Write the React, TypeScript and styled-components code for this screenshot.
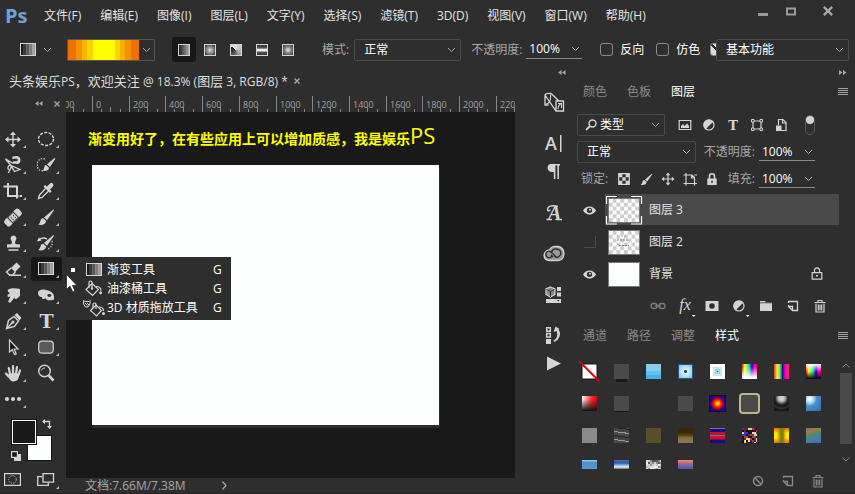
import React from "react";
import styled, { createGlobalStyle } from "styled-components";

const ui = '"Open Sans", "Noto Sans CJK SC", sans-serif';
const ink = "#d4d4d4";

const Global = createGlobalStyle`
  * { box-sizing: border-box; }
  body { margin: 0; background: #2e2e2e; color: #e4e4e4; font: 12px/16px ${ui}; }
  button, input, select { font: inherit; color: inherit; background: none; border: 0; padding: 0; margin: 0; }
  button { cursor: pointer; }
  svg { display: block; flex: none; overflow: visible; }
`;

/* ---------- frame ---------- */
const Page = styled.div`
  display: flex;
  flex-direction: column;
  min-height: 100vh;
  border-bottom: 1px solid #252327;
`;
const MenuBar = styled.header`
  display: flex;
  align-items: center;
  height: 32px;
  padding: 0 4px 0 5px;
`;
const Logo = styled.span`
  width: 34px;
  font: 700 20px/24px "Open Sans", sans-serif;
  color: #6ea3d6;
`;
const Menus = styled.nav`
  display: flex;
  gap: 10px;
  flex: 1;
`;
const MenuButton = styled.button`
  padding: 0 4px 0 5px;
  white-space: nowrap;
`;
const WindowButton = styled.button<{ $wide?: boolean }>`
  display: flex;
  justify-content: center;
  width: ${(p) => (p.$wide ? 46 : 28)}px;
  padding-bottom: 10px;
`;
const OptionsBar = styled.div`
  display: flex;
  align-items: center;
  height: 35px;
  padding: 0 6px 0 20px;
`;
const Body = styled.div`
  display: flex;
  flex: 1;
`;
const Workspace = styled.main`
  display: flex;
  flex-direction: column;
  flex: 1;
  min-width: 0;
`;
const WorkRow = styled.div`
  display: flex;
  flex: 1;
`;

/* ---------- shared controls ---------- */
const IconButton = styled.button<{ $w?: number }>`
  display: flex;
  align-items: center;
  justify-content: center;
  flex: none;
  width: ${(p) => p.$w ?? 24}px;
  height: 22px;
  color: ${ink};
`;
const SelectBox = styled.span<{ $w: number; $gap?: number }>`
  display: grid;
  align-items: center;
  flex: none;
  width: ${(p) => p.$w}px;
  height: 22px;
  margin-left: ${(p) => p.$gap ?? 0}px;
  border: 1px solid #4a4a4a;
  border-radius: 2px;
  > * { grid-area: 1 / 1; }
  > svg { justify-self: end; margin-right: 4px; pointer-events: none; }
`;
const NativeSelect = styled.select<{ $pad?: number }>`
  appearance: none;
  width: 100%;
  height: 20px;
  padding-left: ${(p) => p.$pad ?? 9}px;
  color: #fff;
  outline: none;
  option { background: #2e2e2e; }
`;
const SearchMark = styled.span`
  padding-left: 7px;
  pointer-events: none;
`;
const FieldLabel = styled.label<{ $gap?: number }>`
  flex: none;
  margin-left: ${(p) => p.$gap ?? 0}px;
  color: #a6a6a6;
  white-space: nowrap;
`;
const NumberBox = styled.span`
  display: flex;
  align-items: center;
  flex: none;
  width: 56px;
  height: 18px;
  margin-left: 4px;
  padding: 0 3px;
  border-bottom: 1px solid #8a8a8a;
`;
const NumberInput = styled.input`
  width: 42px;
  color: #fff;
  outline: none;
`;
const Check = styled.label<{ $gap: number }>`
  display: flex;
  align-items: center;
  gap: 7px;
  flex: none;
  margin-left: ${(p) => p.$gap}px;
  color: #fff;
`;
const CheckInput = styled.input<{ $on?: boolean }>`
  appearance: none;
  flex: none;
  width: 13px;
  height: 13px;
  border: 1px solid #8a8a8a;
  border-radius: 3px;
  background: ${(p) => (p.$on ? "linear-gradient(45deg, #dcdcdc 42%, #222 42% 58%, #dcdcdc 58%)" : "transparent")};
`;
const Clipped = styled.span`
  display: flex;
  align-items: center;
  width: 6px;
  margin-left: auto;
  overflow: hidden;
`;

const Chevron = () => (
  <svg width="9" height="6" viewBox="0 0 9 6" fill="none" stroke="#a8a8a8"><path d="M1 1l3.5 3.5L8 1" /></svg>
);
const Select = ({ id, value, w, gap, pad, label }: { id: string; value: string; w: number; gap?: number; pad?: number; label?: string }) => (
  <SelectBox $w={w} $gap={gap}>
    <NativeSelect id={id} $pad={pad} aria-label={label}><option>{value}</option></NativeSelect>
    <Chevron />
  </SelectBox>
);
const Percent = ({ id }: { id: string }) => (
  <NumberBox><NumberInput id={id} defaultValue="100%" /><Chevron /></NumberBox>
);

/* ---------- options bar ---------- */
const PresetButton = styled.button`
  display: flex;
  align-items: center;
  gap: 7px;
`;
const GradientPicker = styled.button`
  display: flex;
  align-items: center;
  gap: 3px;
  width: 88px;
  height: 22px;
  margin-left: 15px;
  border: 1px solid #565656;
  border-radius: 1px;
`;
const GradientFill = styled.span`
  width: 71px;
  height: 20px;
  background: linear-gradient(90deg, #f07000 8px, #f49400 8px 14px, #f8b400 14px 19px, #fcd400 19px 25px,
    #ffff00 25px 47px, #fcd400 47px 52px, #f8b000 52px 57px, #f49000 57px 63px, #f07000 63px);
`;
const TypeGroup = styled.div`
  display: flex;
  gap: 2px;
  margin-left: 17px;
`;
const TypeButton = styled.button<{ $active?: boolean }>`
  display: flex;
  align-items: center;
  justify-content: center;
  width: 24px;
  height: 25px;
  border-radius: 3px;
  background: ${(p) => (p.$active ? "#171717" : "none")};
`;
const TypeChip = styled.span<{ $fill: string }>`
  width: 12px;
  height: 12px;
  border: 1px solid #d4d4d4;
  background: ${(p) => p.$fill};
`;

const GradientGlyph = () => (
  <svg width="16" height="13" viewBox="0 0 16 13">
    <rect width="16" height="13" fill={ink} />
    {["#1c1c1c", "#3a3a3a", "#585858", "#7c7c7c", "#a0a0a0"].map((c, i) => (
      <rect key={c} x={1 + i * 2.8} y="1" width="2.8" height="11" fill={c} />
    ))}
  </svg>
);

/* ---------- document ---------- */
const DocTab = styled.div`
  display: flex;
  align-items: center;
  gap: 6px;
  height: 28px;
  padding-left: 9px;
  font-size: 13px;
  white-space: nowrap;
  color: #dedede;
`;
const TabLatin = styled.span`
  font-size: 12px;
`;
const DocColumn = styled.div`
  display: flex;
  flex-direction: column;
  flex: 1;
  min-width: 0;
`;
const RulerBox = styled.div`
  height: 17px;
  overflow: hidden;
`;
const Canvas = styled.div`
  flex: 1;
  padding: 13px 76px 0 22px;
  background: #191919;
  overflow: hidden;
`;
const Caption = styled.p`
  height: 20px;
  margin: 0;
  font: 700 14px/20px "Noto Sans CJK SC", sans-serif;
  color: #ffff00;
  white-space: nowrap;
`;
const CaptionLatin = styled.span`
  font: 400 22px/20px "Open Sans", sans-serif;
`;
const Artboard = styled.div`
  height: 260px;
  margin: 20px 0 0 4px;
  background: #fdfefe;
  box-shadow: 2px 3px 0 -1px #2e2e2e, 0 3px 0 #2a2a2a;
`;
const StatusBar = styled.footer`
  display: flex;
  align-items: center;
  gap: 36px;
  height: 15px;
  padding-left: 19px;
  color: #a8a8a8;
`;

const Ruler = () => {
  const step = 36.7;
  const ticks = Array.from({ length: 13 }, (_, i) => i - 1);
  return (
    <RulerBox>
      <svg width="449" height="17" fill="#a2a2a2" fontSize="9" fontFamily="Open Sans, sans-serif">
        {ticks.map((i) => {
          const x = Math.round(26 + i * step);
          return (
            <g key={i}>
              <rect x={x} y="1" width="1" height="16" fill="#858585" />
              {[9, 18, 28].map((d) => <rect key={d} x={x + d} y={d === 18 ? 12 : 14} width="1" height="5" fill="#858585" />)}
              <text x={x + 4} y="13">{Math.abs(i * 200)}</text>
            </g>
          );
        })}
      </svg>
    </RulerBox>
  );
};

/* ---------- toolbox ---------- */
const Toolbox = styled.aside`
  flex: none;
  width: 66px;
`;
const ToolboxHead = styled.div`
  display: flex;
  align-items: center;
  justify-content: flex-end;
  gap: 11px;
  height: 17px;
  padding-right: 6px;
`;
const Tools = styled.div`
  display: grid;
  grid-template-columns: 29px 31px;
  grid-auto-rows: 24px;
  gap: 2px;
  margin-top: 15px;
`;
const ToolSlot = styled.div`
  position: relative;
`;
const ToolButton = styled.button<{ $active?: boolean }>`
  display: flex;
  justify-content: flex-end;
  width: 100%;
  height: 24px;
  padding-right: 2px;
  border-radius: 3px;
  background: ${(p) => (p.$active ? "#171717" : "none")};
`;
const Colors = styled.div`
  display: grid;
  grid-template-columns: 16px 10px 15px;
  grid-template-rows: 16px 10px 16px;
  margin: 8px 0 0 11px;
`;
const ColorButton = styled.button<{ $front?: boolean }>`
  grid-area: ${(p) => (p.$front ? "1 / 1 / 3 / 3" : "2 / 2 / 4 / 4")};
  z-index: ${(p) => (p.$front ? 1 : 0)};
  border: 1px solid #151515;
  background: ${(p) => (p.$front ? "#191919" : "#fdfefe")};
  box-shadow: ${(p) => (p.$front ? "inset 0 0 0 1px #fff" : "none")};
`;
const SwapButton = styled.button`
  grid-area: 1 / 3;
  justify-self: end;
  align-self: start;
`;
const ResetButton = styled.button`
  grid-area: 3 / 1;
  justify-self: start;
  align-self: end;
`;
const ModeRow = styled.div`
  display: flex;
  gap: 16px;
  margin-top: 12px;
  padding-left: 4px;
`;
const ModeButton = styled.button`
  display: flex;
  height: 15px;
`;
const Flyout = styled.div`
  position: absolute;
  left: 35px;
  top: 0;
  z-index: 2;
  width: 165px;
  padding: 3px 0;
  background: #2e2e2e;
`;
const FlyoutItem = styled.button`
  display: grid;
  grid-template-columns: 9px 27px 1fr 18px;
  align-items: center;
  width: 100%;
  height: 19px;
  padding-left: 5px;
  text-align: left;
  color: #fff;
  > svg { justify-self: center; }
`;
const CurrentMark = styled.span<{ $on?: boolean }>`
  width: 4px;
  height: 4px;
  background: ${(p) => (p.$on ? "#fff" : "none")};
`;
const Pointer = styled.svg`
  position: absolute;
  left: 35px;
  top: 17px;
  z-index: 3;
`;

const Brush = () => (
  <g fill={ink}>
    <path d="M20.4 4.4L21 5.2L14 15.2L11 12.4Z" />
    <path d="M10.2 13.2C8 13.2 7.6 15 7.2 16.8C6.8 18.4 5.8 19.2 5 19.6C8.4 20.6 12.6 20 13.2 16Z" />
  </g>
);
const Bucket = () => (
  <svg width="19" height="17" viewBox="0 0 19 17" fill="none" stroke={ink} strokeWidth="1.2">
    <path d="M8 3.5L14.5 9.5L8.5 15.5L2 9.5Z" /><path d="M5 8V2.5C5 .5 8 .5 8 2.5V8" />
    <path d="M12 6.5c4 0 5 2 5 4" /><circle cx="16.6" cy="12.8" r="1.5" fill={ink} stroke="none" />
    <circle cx="8" cy="8.5" r="1.2" fill={ink} stroke="none" />
  </svg>
);
const Bucket3D = () => (
  <svg width="22" height="18" viewBox="0 0 22 18" fill="none" stroke={ink} strokeWidth="1.2">
    <path d="M.5 1.5L2 2.5H6L7 1.5V5L5 8H2.5L.5 5Z" strokeWidth="1" />
    <path d="M2 4h1v1H2zM4 4h1v1H4zM3 5h1v1H3zM5 5h1v1H5zM4 6.5h1v1H4z" fill={ink} stroke="none" />
    <path d="M13 6L18.5 11.5L13.5 17L7.5 11.5Z" /><path d="M10 9.5V5.5C10 3.5 13 3.5 13 5.5V10" />
    <path d="M16 8c3.5 0 4.5 2 4.5 4" /><circle cx="20.5" cy="14.5" r="1.5" fill={ink} stroke="none" />
  </svg>
);

type Tool = { name: string; art: React.ReactNode; plain?: boolean };
const S = ({ children, w = 1.4 }: { children: React.ReactNode; w?: number }) => (
  <g fill="none" stroke={ink} strokeWidth={w}>{children}</g>
);
const tools: Tool[] = [
  { name: "移动工具", art: <><S><path d="M13 6v13M6 12.5h14" /></S><path fill={ink} d="M13 4.5l3 3.5h-6zM13 20.5l3-3.5h-6zM5 12.5l3.5-3v6zM21 12.5l-3.5-3v6z" /></> },
  { name: "椭圆选框工具", art: <S><ellipse cx="13" cy="12" rx="7.5" ry="6.5" strokeDasharray="3 1.4" /></S> },
  { name: "磁性套索工具", art: <><S w={1.3}><path d="M11 12.5L5.5 6L13.5 10.5M11 12.5L20 16.5L14.5 18.5L11 12.5M11 12.5c1 4-2 4-2.5 7.5M11 12.5c-3-1-4 3-2 4" /></S><path fill={ink} d="M12.5 3.5L17 3C21.5 3.5 21.5 10 18 11L13 10.5L13.2 8.2L17 8.3C18.2 7.5 17.8 6 16.5 5.6L12.3 6Z" /></> },
  { name: "快速选择工具", art: <><S w={1.2}><path d="M12 6C6 4 3.5 9 4.5 14C5.5 18 9 18.5 11 17" strokeDasharray="1.4 1.4" /></S><g transform="translate(2 -.5)"><path fill={ink} d="M19.5 5.5L20.4 6.3L15 14.5L12 11.7ZM11 12.5C8.5 13 10 16 7.5 18C11 19 14 18 14 15.2Z" /></g></> },
  { name: "裁剪工具", art: <S w={2}><path d="M3.5 7.5H17V19.5M8 4V17H18.5" /><path d="M19.5 17H22" /></S> },
  { name: "吸管工具", art: <><S w={1.4}><path d="M13 9L6.5 16L5.5 19.5L9 18.5L15.5 12" /></S><path fill={ink} d="M10.5 7.5L12 6L14 7.5L17 4.5C19 3 21.5 5.5 20 7.5L17 10.5L18.6 12.4L17 14Z" /></> },
  { name: "修复画笔工具", art: <g transform="rotate(-45 13 12.5)"><rect x="3" y="8.5" width="20" height="8" rx="2.5" fill={ink} /><rect x="8.5" y="8.5" width="9" height="8" fill="#2e2e2e" /><rect x="9.5" y="9.2" width="7" height="6.6" fill={ink} /><path d="M11 11h1.2v1.2H11zM14 11h1.2v1.2H14zM11 13.5h1.2v1.2H11zM14 13.5h1.2v1.2H14z" fill="#2e2e2e" /></g> },
  { name: "画笔工具", art: <Brush /> },
  { name: "仿制图章工具", art: <path fill={ink} d="M13.5 4.5a3 3 0 0 1 2.2 5c-.8.9-.7 3 .1 3.7h3.2c.7 0 1 .3 1 1v2.3H7v-2.3c0-.7.3-1 1-1h3.2c.8-.7.9-2.8.1-3.7a3 3 0 0 1 2.2-5zM8.5 18.3h10v1.5h-10z" /> },
  { name: "历史记录画笔工具", art: <><g transform="translate(0 -.5)"><Brush /></g><S w={1.4}><path d="M5 9.5C8 6.5 11 6.5 14 8" /><path d="M19 10c1 4-1 7-5 8.5" strokeDasharray="1.2 1.6" /></S><path fill={ink} d="M4 10.5l2-4 2.5 3z" /></> },
  { name: "橡皮擦工具", art: <><path fill={ink} d="M11 11L16.5 5.5L20.5 9.5L15 15Z" /><S><path d="M11 11L6.5 15L9.5 18H13L15.5 14.5M9 18.2H21" /></S></> },
  { name: "渐变工具", art: <g transform="translate(5 5)"><GradientGlyph /></g> },
  { name: "涂抹工具", art: <path fill={ink} d="M8 6.5C12 4.5 16 5 20 6V13L17 15.5C16 16.5 14.5 16 14.5 14.5L11 19C10 20.5 7.5 19.5 8.5 17.5L10.5 13.5C9 14.5 7 14 7.5 12L10 10C8.5 9.5 7 8 8 6.5Z" /> },
  { name: "海绵工具", art: <><path fill={ink} d="M5 10C5 7 9 5.8 13 7C17 7.5 20.5 10 21 13V16.5C17 18 14 17.5 12.5 15.5L9.5 16.2L9 14.2C6 14 5 12 5 10Z" /><ellipse cx="16.3" cy="12.5" rx="2" ry="1.4" fill="#2e2e2e" /></> },
  { name: "钢笔工具", art: <><S><path d="M6.5 19.5L8.5 11.5L14 7.5L18.5 12L14.5 17.5Z" /><path d="M6.5 19.5L12.5 13.5" /></S><circle cx="13" cy="13" r="1.5" fill={ink} /><path fill={ink} d="M14.5 6L17 4L21.5 9L19.5 11.5Z" /></> },
  { name: "文字工具", art: <text x="13.5" y="19" textAnchor="middle" fill={ink} fontFamily="'DejaVu Serif', serif" fontSize="19" fontWeight="700">T</text> },
  { name: "选择工具", art: <S w={1.2}><path d="M9.5 5V17L12.3 14.5L14.5 19.5L16.2 18.8L14.2 14H18Z" fill="#151515" /></S> },
  { name: "圆角矩形工具", art: <rect x="5.7" y="6.2" width="14.6" height="12" rx="3.5" fill="#5a5a5a" stroke={ink} strokeWidth="1.2" /> },
  { name: "抓手工具", art: <g fill="none" stroke={ink} strokeWidth="2.2" strokeLinecap="round"><path d="M10 13L8.8 7M13 13V5M16 13L17 6M18.5 14L20 9.5M8.5 15.5L6 12.5" /><path d="M8 14C10 12.5 17 12 19 13.5L17.5 18.5C15 20.5 11.5 20.5 10.5 19Z" fill={ink} strokeWidth="1" /></g> },
  { name: "缩放工具", plain: true, art: <S><circle cx="11.5" cy="10" r="5.8" /><path d="M8.5 9.5C9 7.5 10.5 7 12 7" strokeWidth="1" /><path d="M15.8 14.5L20.5 19.5" strokeWidth="2.6" /></S> },
  { name: "编辑工具栏", art: <g fill={ink}><circle cx="7" cy="12" r="2.1" /><circle cx="13" cy="12" r="2.1" /><circle cx="19" cy="12" r="2.1" /></g> },
];

const CloseMark = ({ s = 6 }: { s?: number }) => (
  <svg width={s} height={s} viewBox="0 0 6 6" stroke="#a8a8a8" strokeWidth="1.4"><path d="M.5.5l5 5M5.5.5l-5 5" /></svg>
);
const Double = ({ right }: { right?: boolean }) => (
  <svg width="8" height="5" viewBox="0 0 8 5" fill="#a8a8a8">
    {right ? <path d="M0 0l3.5 2.5L0 5zM4 0l3.5 2.5L4 5z" /> : <path d="M3.5 0L0 2.5L3.5 5zM7.5 0L4 2.5L7.5 5z" />}
  </svg>
);

const flyout = [
  { label: "渐变工具", art: <GradientGlyph />, on: true },
  { label: "油漆桶工具", art: <Bucket /> },
  { label: "3D 材质拖放工具", art: <Bucket3D /> },
];

/* ---------- collapsed icon dock ---------- */
const IconDock = styled.aside`
  flex: none;
  width: 59px;
`;
const DockHead = styled.div`
  display: flex;
  justify-content: flex-end;
  align-items: center;
  height: 11px;
  padding-right: 8px;
`;
const DockStack = styled.div`
  display: flex;
  flex-direction: column;
  gap: 17px;
  padding: 12px 0 0 27px;
`;
const DockGroup = styled.div`
  display: flex;
  flex-direction: column;
  gap: 4px;
`;
const DockButton = styled.button`
  display: flex;
  align-items: center;
  justify-content: center;
  width: 24px;
  height: 24px;
`;

const dock: { name: string; art: React.ReactNode }[][] = [
  [{ name: "画笔预设", art: <S w={1.3}><path d="M3 5v10h3.5M3 5C3.5 3 6 3.5 9 3.5L17 11M3 5L14 21H21.5V11H14V21" /><path d="M3.5 14C8 14 9 9 8.5 4.5M16 13.5h3.500V18M16 19c0-3 1-4.500 3.500-5.500" strokeWidth="1.1" /></S> }],
  [
    { name: "字符", art: <><text x="3" y="19" fill={ink} fontFamily="'Open Sans', sans-serif" fontWeight="600" fontSize="18">A</text><rect x="18" y="4" width="1.5" height="17" fill={ink} /></> },
    { name: "段落", art: <path fill={ink} d="M8.5 5H18v1.5h-1V20h-1.6V6.5h-2V20h-1.6V13C4.5 14 4 5.5 8.5 5Z" /> },
  ],
  [{ name: "字形", art: <><text x="6" y="20" fill={ink} fontFamily="'Liberation Serif', serif" fontStyle="italic" fontWeight="700" fontSize="20">A</text><S><path d="M16 6.5C9 4.5 5.5 6.5 5.5 9.5C6 11.5 8 11 8 9.5M4.5 19.5H10M14 19.5h6" /></S></> }],
  [{ name: "Creative Cloud", art: <g fill="none"><path d="M7.5 19.5C0 19.5 .5 9.5 7.5 9C10 3.5 22 4 22 12.5C22 17 19 19.5 15.5 19.5Z" fill="#989898" stroke={ink} strokeWidth="1.3" /><path d="M14 16L9 11C6 8.7 3.5 11.5 4 14C4.5 17 8 17.5 10 15.5M11 16L9 14M9.5 11C11 6.5 18.5 7 18.8 12C18.5 17 13.5 17 12.5 15" stroke="#2e2e2e" strokeWidth="1.4" /></g> }],
  [{ name: "库", art: <><path d="M8.5 5L13 7v5.5L8.5 15L4 12.5V7Z" fill="#888" stroke={ink} strokeWidth="1.2" /><path d="M4.5 7.5l4 2 4-2M8.5 9.5V15" stroke="#333" fill="none" /><path fill={ink} d="M15 5h4v4h-4zM15 10.5h4v4h-4zM4 17h15v4H4z" /><path d="M15 18l1.3 1.5L17.5 18z" fill="#222" /></> }],
  [
    { name: "历史记录", art: <><S w={1.5}><path d="M4.7 4.7h3.6v3.6H4.7zM4.7 10.5h3.6v3.6H4.7z" /></S><path fill={ink} d="M4 16h5v5H4zM11.5 9L13.5 3.5L17.5 6L16.5 6.5C19.5 10 18 17 12 19L11.5 17.5C15.5 15.5 16 11.5 14.5 8Z" /></> },
    { name: "动作", art: <path fill={ink} d="M5 5.5L19 12.5L5 19.5Z" /> },
  ],
];

/* ---------- right panels ---------- */
const Panels = styled.aside`
  display: flex;
  flex-direction: column;
  flex: none;
  width: 281px;
`;
const PanelTabs = styled.div`
  display: flex;
  align-items: center;
  gap: 20px;
  height: 28px;
  padding: 0 7px 0 9px;
`;
const PanelTab = styled.button<{ $active?: boolean }>`
  color: ${(p) => (p.$active ? "#fff" : "#8a8a8a")};
`;
const PanelMenu = styled.button`
  margin-left: auto;
`;
const PanelRow = styled.div<{ $top?: number }>`
  display: flex;
  align-items: center;
  height: 22px;
  margin-top: ${(p) => p.$top ?? 5}px;
  padding: 0 40px 0 3px;
`;
const RowEnd = styled.span`
  display: flex;
  align-items: center;
  margin-left: auto;
`;
const Toggle = styled.button`
  width: 10px;
  height: 20px;
  margin-left: 12px;
  border: 1px solid #5a5a5a;
  border-radius: 5px;
`;
const ToggleKnob = styled.span`
  display: block;
  width: 8px;
  height: 8px;
  margin-bottom: 10px;
  border-radius: 50%;
  background: ${ink};
`;
const LayerList = styled.ul`
  list-style: none;
  margin: 4px 16px 0 0;
  padding: 0;
`;
const LayerRow = styled.li`
  display: grid;
  grid-template-columns: 31px 1fr;
  height: 32px;
`;
const EyeButton = styled.button`
  display: flex;
  align-items: center;
  justify-content: center;
`;
const HiddenEye = styled.span`
  width: 12px;
  height: 12px;
  border: solid #4a4a4a;
  border-width: 0 1px 1px 0;
`;
const LayerBody = styled.div<{ $active?: boolean }>`
  display: flex;
  align-items: center;
  gap: 6px;
  height: 31px;
  padding: 0 16px 0 0;
  background: ${(p) => (p.$active ? "#4a4a4a" : "none")};
  > svg:last-child { margin-left: auto; }
`;
const PanelFooter = styled.div<{ $h: number }>`
  display: flex;
  align-items: center;
  justify-content: flex-end;
  height: ${(p) => p.$h}px;
  padding-right: 22px;
`;
const StylesArea = styled.div`
  display: flex;
  justify-content: space-between;
  height: 114px;
  margin-top: 5px;
  padding-right: 3px;
  overflow: hidden;
`;
const StyleGrid = styled.div`
  display: grid;
  grid-template-columns: repeat(8, 32px);
  grid-auto-rows: 32px;
`;
const StyleCell = styled.button`
  display: flex;
  align-items: center;
  padding-left: 8px;
`;
const StyleChip = styled.span<{ $fill: string; $shadow?: string; $ring?: boolean }>`
  width: ${(p) => (p.$ring ? 21 : 15)}px;
  height: ${(p) => (p.$ring ? 21 : 15)}px;
  flex: none;
  margin-left: ${(p) => (p.$ring ? -3 : 0)}px;
  border: ${(p) => (p.$ring ? "2px solid #b8b88a" : "0")};
  border-radius: ${(p) => (p.$ring ? 4 : 0)}px;
  background: ${(p) => p.$fill};
  box-shadow: ${(p) => p.$shadow ?? "none"};
`;
const ScrollTrack = styled.div`
  display: flex;
  flex-direction: column;
  align-items: center;
  justify-content: space-between;
  width: 13px;
  padding: 8px 0 7px;
`;
const ScrollThumb = styled.span`
  width: 12px;
  height: 71px;
  margin-bottom: 8px;
  background: #4a4a4a;
`;

const I = ({ children, s = 14 }: { children: React.ReactNode; s?: number }) => (
  <svg width={s} height={s} viewBox="0 0 14 14" fill="none" stroke={ink} strokeWidth="1.2">{children}</svg>
);
const More = () => <path d="M14 16h3.5l-1.7 2z" fill="#fff" stroke="none" />;
const Half = ({ more }: { more?: boolean }) => <I><circle cx="7" cy="7" r="5" fill="#2e2e2e" /><path d="M3.4 10.6A5 5 0 0 1 10.6 3.4Z" fill={ink} />{more && <More />}</I>;
const Lines = () => <svg width="10" height="8" fill="#a0a0a0"><path d="M0 0h10v1H0zM0 2h10v1H0zM0 4h10v1H0zM0 6h10v1H0z" /></svg>;
const NewSheet = ({ c = ink }: { c?: string }) => <I><path d="M2.5 4V2.5h9v9H6.5L2.5 7.5V6M2.5 7.5h4v4" stroke={c} strokeWidth="1.3" /></I>;
const Trash = ({ c = ink }: { c?: string }) => <I><path d="M1.5 3.5h11M5 3.2V1.5h4v1.7M3 4.5V13h8V4.5M5.3 5.5v6M7 5.5v6M8.7 5.5v6" stroke={c} /></I>;
const Eye = () => <svg width="13" height="9" viewBox="0 0 13 9"><path d="M0 4.5C3-1 10-1 13 4.5C10 10 3 10 0 4.5Z" fill={ink} /><circle cx="6.5" cy="4.3" r="2.6" fill="#2e2e2e" /><circle cx="7" cy="3.8" r="1" fill={ink} /></svg>;

const filters = [
  { name: "像素图层", art: <I><path d="M1.2 2.5h11.6v9H1.2z" /><path d="M3 10V8l2-2 1.5 2L9 5.5l2 2.5v2z" fill={ink} stroke="none" /></I> },
  { name: "调整图层", art: <Half /> },
  { name: "文字图层", art: <I><text x="7" y="11.5" textAnchor="middle" fill={ink} stroke="none" fontFamily="'DejaVu Serif', serif" fontWeight="700" fontSize="13">T</text></I> },
  { name: "形状图层", art: <I><path d="M3 3h8v8H3z" /><path d="M1.5 1.5h2.5v2.5H1.5zM10 1.5h2.5v2.5H10zM1.5 10h2.5v2.5H1.5zM10 10h2.5v2.5H10z" fill="#2e2e2e" strokeWidth="1" /></I> },
  { name: "智能对象", art: <I><path d="M4.5 7V1.5h4.5L12 4.5v8H7" /><path d="M8.5 2v3H12" /><path d="M2 7.5h5.5V13H2z" fill={ink} stroke="none" /></I> },
];
const locks = [
  { name: "锁定透明像素", art: <I><path d="M1.7 1.7h10.6v10.6H1.7z" /><path fill={ink} stroke="none" d="M2 2h3.3v3.3H2zM8.7 2H12v3.3H8.7zM5.3 5.3h3.4v3.4H5.3zM2 8.7h3.3V12H2zM8.7 8.7H12V12H8.7z" /></I> },
  { name: "锁定图像像素", art: <svg width="13" height="13" viewBox="4 4 18 17"><Brush /></svg> },
  { name: "锁定位置", art: <I><path d="M7 2.5v9M2.5 7h9" /><path stroke="none" fill={ink} d="M7 .5l2.3 2.7H4.7zM7 13.5l2.3-2.7H4.7zM.5 7l2.7-2.3v4.6zM13.5 7l-2.7-2.3v4.6z" /></I> },
  { name: "防止自动嵌套", art: <I><path d="M3 1v12.5M.5 3h8.5L11.5 5.5V13.5M.5 11.5H14M8.5 3v3h3M11.5 3H14" /></I> },
  { name: "锁定全部", art: <I><path d="M4.5 7V4.2a2.5 2.5 0 0 1 5 0V7" strokeWidth="1.6" /><path d="M2.3 6.5h9.4V13H2.3z" fill={ink} stroke="none" /><circle cx="7" cy="9.7" r="1" fill="#2e2e2e" stroke="none" /></I> },
];
const layerActions = [
  { name: "链接图层", art: <I><g stroke="#7c7c7c" strokeWidth="1.3"><rect x="0" y="4.5" width="6" height="5" rx="2.5" /><rect x="8" y="4.5" width="6" height="5" rx="2.5" /><path d="M4 7h6" /></g></I> },
  { name: "图层样式", art: <I><text x="7" y="11" textAnchor="middle" fill={ink} stroke="none" fontFamily="'Liberation Serif', serif" fontStyle="italic" fontSize="16">fx</text><More /></I> },
  { name: "图层蒙版", art: <I><path d="M.5 2h13v10H.5z" fill={ink} stroke="none" /><circle cx="7" cy="7" r="2.8" fill="#2e2e2e" stroke="none" /></I> },
  { name: "新建调整图层", art: <Half more /> },
  { name: "新建组", art: <I><path d="M1 2h5l1 1.5h6V12H1z" fill={ink} stroke="none" /><path d="M1 3.8h12" stroke="#2e2e2e" strokeWidth=".8" /></I> },
  { name: "新建图层", art: <NewSheet /> },
  { name: "删除图层", art: <Trash /> },
];

const Thumb = ({ kind }: { kind: "selected" | "marks" | "solid" }) => (
  <svg width="38" height="30" viewBox="0 0 38 30">
    <rect x="3.5" y="3.5" width="31" height="24" fill="#fdfefe" stroke="#777" />
    {kind !== "solid" && Array.from({ length: 48 }, (_, i) => {
      const c = i % 8, r = Math.floor(i / 8);
      return (c + r) % 2 ? <rect key={i} x={4 + c * 3.75} y={4 + r * 3.833} width="3.75" height="3.833" fill="#cdcdcd" /> : null;
    })}
    {kind === "marks" && <g strokeWidth="1" strokeDasharray="2 1"><path d="M12 13h11" stroke="#777" /><path d="M14 18.5h10" stroke="#b66" /><path d="M16 9h5" stroke="#aaa" /></g>}
    {kind === "selected" && <path d="M1.5 9V1.5H12M26 1.5h10.5V9M36.5 21v8H26M12 29H1.5V21" fill="none" stroke="#fff" strokeWidth="1.2" />}
  </svg>
);
const LayerLock = () => <svg width="12" height="13" viewBox="0 0 12 13" fill="none" stroke={ink} strokeWidth="1.2"><path d="M3.5 5.5V3.3a2.5 2.5 0 0 1 5 0v2.2M1.2 5.6h9.6v6.6H1.2z" /><circle cx="6" cy="8.8" r="1" fill={ink} stroke="none" /></svg>;

type Chip = { fill: string; shadow?: string; ring?: boolean; none?: boolean; empty?: boolean; mosaic?: string[] };
const rainbow = "#f03,#ff0,#7f6,#2bd,#20a,#f0e,#f03";
const chips: Chip[] = [
  { fill: "#fff", none: true },
  { fill: "#4a4a4a", shadow: "0 5px 0 -2px #191919" },
  { fill: "linear-gradient(#8accea 50%, #5cc4ee 50% 75%, #48b4e4 75%)" },
  { fill: "radial-gradient(circle, #246 1px, #d8f2f8 2px, #a8d8ee 6px, #78b8e0 9px)", shadow: "inset 0 0 0 1px #27598e" },
  { fill: "linear-gradient(#26a, #26a) 7px 7px / 1px 1px no-repeat, linear-gradient(#9cd4e6, #9cd4e6) 5px 5px / 5px 5px no-repeat, linear-gradient(#c8e8f2, #c8e8f2) 3px 3px / 9px 9px no-repeat, #fff" },
  { fill: `linear-gradient(transparent 20%, #fff 90%), linear-gradient(90deg, ${rainbow})` },
  { fill: "linear-gradient(90deg,#d33,#fe2 20%,#6e6 38%,#36c 50%,#116 56%,#b0b 68%,#f0c 80%,#f33)" },
  { fill: `linear-gradient(#fff, transparent 50%, #111 95%), linear-gradient(90deg, ${rainbow})` },
  { fill: "linear-gradient(transparent 20%, #111), linear-gradient(90deg, #fff, #f33 60%, #e00)" },
  { fill: "#4a4a4a", shadow: "0 1px 0 #151515" },
  { fill: "none", empty: true },
  { fill: "#4a4a4a" },
  { fill: "radial-gradient(circle, #fd0 1px, #f40 3px, #d00 5px, #209 7px)", shadow: "0 0 0 1px #111" },
  { fill: "#4a4a4a", ring: true },
  { fill: "radial-gradient(circle at 50% 15%, #ccc 2px, #999 4px, #333 6px, #151515 8px, #333 10px, #151515 12px)" },
  { fill: "radial-gradient(circle at 25% 20%, #fff 1px, #a8d4f4 4px, #4a90d0 7px, #2f6cb0)" },
  { fill: "#8a8a8a" },
  { fill: "repeating-linear-gradient(8deg, #4a4a4a 0 3px, #999 3px 4px, #444 4px 7px, #222 7px 8px)" },
  { fill: "#5a4e2e" },
  { fill: "linear-gradient(#3a2804 30%, #5a4410 50%, #77704e 65%, #8f7350 80%)" },
  { fill: "linear-gradient(#76c 1px, #20087a 1px 4px, #c01030 4px 7px, #777 7px 8px, #d01030 8px 11px, #20087a 12px)" },
  { fill: "", mosaic: ["#111", "#33c", "#111", "#c33", "#ed8", "#427", "#813", "#116", "#dd5"] },
  { fill: "linear-gradient(90deg, transparent 20%, #877d0a 45% 60%, transparent 80%), linear-gradient(#e87000, #ffe600 35% 65%, #e87000)" },
  { fill: "linear-gradient(160deg, #6a7a80, #a87840 25%, #489060 45%, #4878b8 70%, #5868a0)" },
  { fill: "linear-gradient(#8cc4ec 1px, #5090cc 2px 5px, #6aaee0)" },
  { fill: "linear-gradient(#667 0, #1f5cc0 3px, #6cb4f0 5px, #eef 7px, #764 9px)" },
  { fill: "", mosaic: ["#ddd", "#888", "#ccc", "#555", "#eee", "#999", "#bbb"] },
  { fill: "linear-gradient(#e09080, #c86878 3px, #8060a8 5px, #4858a8 9px)" },
];

/* Speckled texture built from a repeatable pseudo-random pick of the palette. */
const Mosaic = ({ colors }: { colors: string[] }) => (
  <svg width="15" height="15" shapeRendering="crispEdges">
    {Array.from({ length: 64 }, (_, i) => {
      const c = i % 8, r = Math.floor(i / 8);
      const pick = Math.floor(Math.abs(Math.sin((c + 1) * 12.9 + r * 78.2) * 43758) % colors.length);
      return <rect key={i} x={c * 2} y={r * 2} width={c === 7 ? 1 : 2} height={r === 7 ? 1 : 2} fill={colors[pick]} />;
    })}
  </svg>
);

const menus = ["文件(F)", "编辑(E)", "图像(I)", "图层(L)", "文字(Y)", "选择(S)", "滤镜(T)", "3D(D)", "视图(V)", "窗口(W)", "帮助(H)"];
const gradientTypes = [
  { name: "线性渐变", fill: "linear-gradient(90deg, #222, #aaa)" },
  { name: "径向渐变", fill: "radial-gradient(circle, #ddd, #777 4px, #333 7px)" },
  { name: "角度渐变", fill: "conic-gradient(#ddd, #aaa 35%, #555 60%, #151515 85%, #ddd 85%)" },
  { name: "对称渐变", fill: "linear-gradient(#333, #555 30%, #eee 45% 60%, #555 70%, #333)" },
  { name: "菱形渐变", fill: "radial-gradient(ellipse, #eee, #888 3px, #333 7px)" },
];

export default function App() {
  return (
    <Page>
      <Global />
      <MenuBar>
        <Logo>Ps</Logo>
        <Menus>{menus.map((m) => <MenuButton key={m}>{m}</MenuButton>)}</Menus>
        <WindowButton aria-label="最小化"><svg width="10" height="9"><path d="M0 6h10v3H0z" fill="#9a9a9a" /></svg></WindowButton>
        <WindowButton aria-label="最大化"><svg width="10" height="9" fill="none" stroke="#9a9a9a" strokeWidth="2"><path d="M1 1.5h8v6H1z" /></svg></WindowButton>
        <WindowButton $wide aria-label="关闭"><CloseMark s={10} /></WindowButton>
      </MenuBar>

      <OptionsBar>
        <PresetButton aria-label="工具预设"><GradientGlyph /><Chevron /></PresetButton>
        <GradientPicker aria-label="渐变"><GradientFill /><Chevron /></GradientPicker>
        <TypeGroup>
          {gradientTypes.map((g, i) => (
            <TypeButton key={g.name} $active={i === 0} aria-label={g.name}><TypeChip $fill={g.fill} /></TypeButton>
          ))}
        </TypeGroup>
        <FieldLabel htmlFor="mode" $gap={22}>模式:</FieldLabel>
        <Select id="mode" value="正常" w={107} gap={5} />
        <FieldLabel htmlFor="opacity" $gap={10}>不透明度:</FieldLabel>
        <Percent id="opacity" />
        <Check $gap={18}><CheckInput type="checkbox" />反向</Check>
        <Check $gap={12}><CheckInput type="checkbox" />仿色</Check>
        <Clipped><CheckInput type="checkbox" defaultChecked $on aria-label="透明区域" /></Clipped>
        <Select id="workspace" value="基本功能" w={133} label="工作区" />
      </OptionsBar>

      <Body>
        <Workspace>
          <DocTab>
            <span>头条娱乐<TabLatin>PS</TabLatin>，欢迎关注<TabLatin> @ 18.3% (</TabLatin>图层<TabLatin> 3, RGB/8) *</TabLatin></span>
            <button aria-label="关闭文档"><CloseMark /></button>
          </DocTab>
          <WorkRow>
            <Toolbox>
              <ToolboxHead>
                <button aria-label="折叠"><Double /></button>
                <button aria-label="关闭工具栏"><CloseMark /></button>
              </ToolboxHead>
              <Tools>
                {tools.map((t) => {
                  const active = t.name === "渐变工具";
                  return (
                    <ToolSlot key={t.name}>
                      <ToolButton $active={active} aria-label={t.name}>
                        <svg width="27" height="24" viewBox="0 0 27 24">
                          {t.art}
                          {!t.plain && <path d="M26 18v3h-3z" fill="#b8b8b8" />}
                        </svg>
                      </ToolButton>
                      {active && (
                        <>
                          <Flyout role="menu">
                            {flyout.map((f) => (
                              <FlyoutItem key={f.label} role="menuitem">
                                <CurrentMark $on={f.on} />{f.art}<span>{f.label}</span><span>G</span>
                              </FlyoutItem>
                            ))}
                          </Flyout>
                          <Pointer width="12" height="19" viewBox="0 0 12 19" aria-hidden="true">
                            <path d="M.5 .5V15.5L4 12.2L6.7 18L9 17L6.5 11.5H11Z" fill="#fff" stroke="#222" strokeWidth=".8" />
                          </Pointer>
                        </>
                      )}
                    </ToolSlot>
                  );
                })}
              </Tools>
              <Colors>
                <ColorButton $front aria-label="前景色" />
                <ColorButton aria-label="背景色" />
                <SwapButton aria-label="切换颜色">
                  <svg width="10" height="10" viewBox="0 0 10 10" fill="none" stroke={ink} strokeWidth="1.3"><path d="M2 2.5h5.5V8" /><path d="M3 0L0 2.5L3 5zM5 7h5L7.5 10z" fill={ink} stroke="none" /></svg>
                </SwapButton>
                <ResetButton aria-label="默认颜色">
                  <svg width="10" height="10" viewBox="0 0 10 10"><path d="M3 3h7v7H3z" fill={ink} /><path d="M.6 .6h5.8v5.8H.6z" fill="#191919" stroke={ink} strokeWidth="1.2" /></svg>
                </ResetButton>
              </Colors>
              <ModeRow>
                <ModeButton aria-label="快速蒙版">
                  <svg width="17" height="13" viewBox="0 0 17 13" fill="none" stroke={ink}><path d="M.6 .6h15.8v11.8H.6z" strokeWidth="1.2" /><circle cx="8.5" cy="6.5" r="3.8" strokeDasharray="1 1.2" /></svg>
                </ModeButton>
                <ModeButton aria-label="屏幕模式">
                  <svg width="23" height="15" viewBox="0 0 23 15" fill="none" stroke={ink} strokeWidth="1.3"><path d="M6 .7h10.5v8.5H6z" /><path d="M5.5 3.7H.7v8.6h10.6V9.5" /><path d="M22 13v3h-3z" fill="#b8b8b8" stroke="none" /></svg>
                </ModeButton>
              </ModeRow>
            </Toolbox>
            <DocColumn>
              <Ruler />
              <Canvas>
                <Caption>渐变用好了，在有些应用上可以增加质感，我是娱乐<CaptionLatin>PS</CaptionLatin></Caption>
                <Artboard />
              </Canvas>
              <StatusBar>
                <span>文档:7.66M/7.38M</span>
                <svg width="5" height="9" viewBox="0 0 5 9" fill="none" stroke="#a8a8a8" strokeWidth="1.2"><path d="M.5 .5l3.5 4-3.5 4" /></svg>
              </StatusBar>
            </DocColumn>
          </WorkRow>
        </Workspace>

        <IconDock>
          <DockHead><Double /></DockHead>
          <DockStack>
            {dock.map((group) => (
              <DockGroup key={group[0].name}>
                {group.map((d) => (
                  <DockButton key={d.name} aria-label={d.name}><svg width="24" height="24" viewBox="0 0 24 24">{d.art}</svg></DockButton>
                ))}
              </DockGroup>
            ))}
          </DockStack>
        </IconDock>

        <Panels>
          <DockHead><Double right /></DockHead>
          <PanelTabs>
            <PanelTab>颜色</PanelTab><PanelTab>色板</PanelTab><PanelTab $active>图层</PanelTab>
            <PanelMenu aria-label="面板菜单"><Lines /></PanelMenu>
          </PanelTabs>
          <PanelRow $top={8}>
            <SelectBox $w={88}>
              <SearchMark><svg width="12" height="12" viewBox="0 0 12 12" fill="none" stroke={ink} strokeWidth="1.4"><circle cx="7.5" cy="4.5" r="3.5" /><path d="M5 7L1 11" strokeWidth="1.8" /></svg></SearchMark>
              <NativeSelect $pad={22} aria-label="筛选类型"><option>类型</option></NativeSelect>
              <Chevron />
            </SelectBox>
            <RowEnd>{filters.map((f) => <IconButton key={f.name} aria-label={f.name}>{f.art}</IconButton>)}</RowEnd>
            <Toggle aria-label="图层过滤开关"><ToggleKnob /></Toggle>
          </PanelRow>
          <PanelRow>
            <Select id="blend" value="正常" w={119} label="混合模式" />
            <RowEnd><FieldLabel htmlFor="layer-opacity">不透明度:</FieldLabel><Percent id="layer-opacity" /></RowEnd>
          </PanelRow>
          <PanelRow>
            <FieldLabel as="span" $gap={4}>锁定:</FieldLabel>
            <RowEnd>{locks.map((l) => <IconButton key={l.name} $w={22} aria-label={l.name}>{l.art}</IconButton>)}</RowEnd>
            <RowEnd><FieldLabel htmlFor="fill">填充:</FieldLabel><Percent id="fill" /></RowEnd>
          </PanelRow>
          <LayerList>
            <LayerRow><EyeButton aria-label="可见"><Eye /></EyeButton><LayerBody $active><Thumb kind="selected" /><span>图层 3</span></LayerBody></LayerRow>
            <LayerRow><EyeButton aria-label="隐藏"><HiddenEye /></EyeButton><LayerBody><Thumb kind="marks" /><span>图层 2</span></LayerBody></LayerRow>
            <LayerRow><EyeButton aria-label="可见"><Eye /></EyeButton><LayerBody><Thumb kind="solid" /><span>背景</span><LayerLock /></LayerBody></LayerRow>
          </LayerList>
          <PanelFooter $h={32}>
            {layerActions.map((a) => <IconButton key={a.name} $w={27} aria-label={a.name}>{a.art}</IconButton>)}
          </PanelFooter>
          <PanelTabs>
            <PanelTab>通道</PanelTab><PanelTab>路径</PanelTab><PanelTab>调整</PanelTab><PanelTab $active>样式</PanelTab>
            <PanelMenu aria-label="面板菜单"><Lines /></PanelMenu>
          </PanelTabs>
          <StylesArea>
            <StyleGrid>
              {chips.map((c, i) => (
                <StyleCell key={i} aria-label={`样式 ${i + 1}`}>
                  {c.none ? (
                    <svg width="15" height="15"><path d="M0 0h15v15H0z" fill="#fff" stroke="#151515" /><path d="M-2.5-2.5l20 20" stroke="#d8000c" strokeWidth="2" /></svg>
                  ) : c.mosaic ? <Mosaic colors={c.mosaic} /> : !c.empty && <StyleChip $fill={c.fill} $shadow={c.shadow} $ring={c.ring} />}
                </StyleCell>
              ))}
            </StyleGrid>
            <ScrollTrack>
              <svg width="8" height="5" viewBox="0 0 8 5" fill="none" stroke="#8a8a8a"><path d="M.5 4.5L4 1l3.5 3.5" /></svg>
              <ScrollThumb />
              <svg width="8" height="5" viewBox="0 0 8 5" fill="none" stroke="#8a8a8a"><path d="M.5 .5L4 4L7.5 .5" /></svg>
            </ScrollTrack>
          </StylesArea>
          <PanelFooter $h={24}>
            <IconButton $w={30} aria-label="清除样式"><I><circle cx="7" cy="7" r="4.5" stroke="#8a8a8a" strokeWidth="1.5" /><path d="M4 4l6 6" stroke="#8a8a8a" strokeWidth="1.5" /></I></IconButton>
            <IconButton $w={30} aria-label="新建样式"><NewSheet c="#8a8a8a" /></IconButton>
            <IconButton $w={30} aria-label="删除样式"><Trash c="#8a8a8a" /></IconButton>
          </PanelFooter>
        </Panels>
      </Body>
    </Page>
  );
}
